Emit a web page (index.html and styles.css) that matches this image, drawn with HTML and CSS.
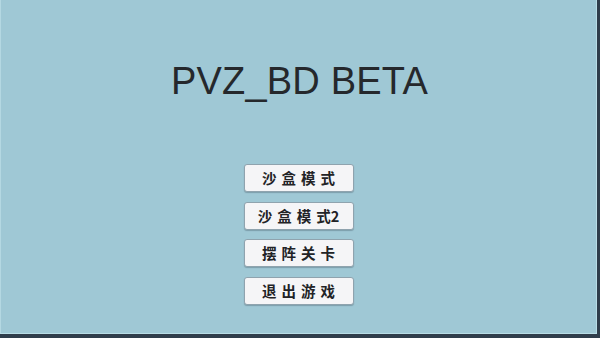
FILE: index.html
```html
<!DOCTYPE html>
<html lang="zh">
<head>
<meta charset="utf-8">
<title>PVZ_BD BETA</title>
<link rel="stylesheet" href="styles.css">
</head>
<body>
<div class="screen">
  <div class="stage">
    <h1 class="title">PVZ_BD BETA</h1>
    <nav class="menu">
      <button class="btn">沙盒模式</button>
      <button class="btn btn-tight"><span class="sp">沙盒模</span>式2</button>
      <button class="btn">摆阵关卡</button>
      <button class="btn">退出游戏</button>
    </nav>
  </div>
</div>
</body>
</html>
```

FILE: styles.css
```css
html, body {
  margin: 0;
  padding: 0;
  width: 600px;
  height: 338px;
  overflow: hidden;
  background: #2f3d4b;
}
.screen {
  width: 600px;
  height: 338px;
  box-sizing: border-box;
  border-right: 3px solid #2f3d4b;
  border-bottom: 4px solid #2f3d4b;
  background: #2f3d4b;
}
.stage {
  height: 100%;
  box-sizing: border-box;
  background: #9fc8d5;
  border-right: 1px solid #b9dde6;
  border-bottom: 1px solid #b9dde6;
  border-left: 1px solid #b4d8e2;
  display: flex;
  flex-direction: column;
  align-items: center;
  font-family: "Liberation Sans", "Noto Sans CJK SC", sans-serif;
}
.title {
  margin: 61px 0 0 2px;
  font-weight: normal;
  font-size: 38px;
  line-height: 40px;
  color: #25282c;
  letter-spacing: 0.2px;
}
.menu {
  margin-top: 63px;
  display: flex;
  flex-direction: column;
  gap: 9.5px;
}
.btn {
  width: 110px;
  height: 28px;
  padding: 0 0 0 5px;
  box-sizing: border-box;
  background: #f5f5f7;
  border: 1px solid #8fa3ae;
  border-radius: 3px;
  box-shadow: 0 1px 1px rgba(60, 80, 95, 0.35);
  font-family: "Noto Sans CJK SC", "Liberation Sans", sans-serif;
  font-size: 14.5px;
  font-weight: bold;
  letter-spacing: 5px;
  color: #222326;
  line-height: 26px;
}
.btn-tight {
  letter-spacing: 0;
  padding: 0;
}
.sp {
  letter-spacing: 5px;
}
```
